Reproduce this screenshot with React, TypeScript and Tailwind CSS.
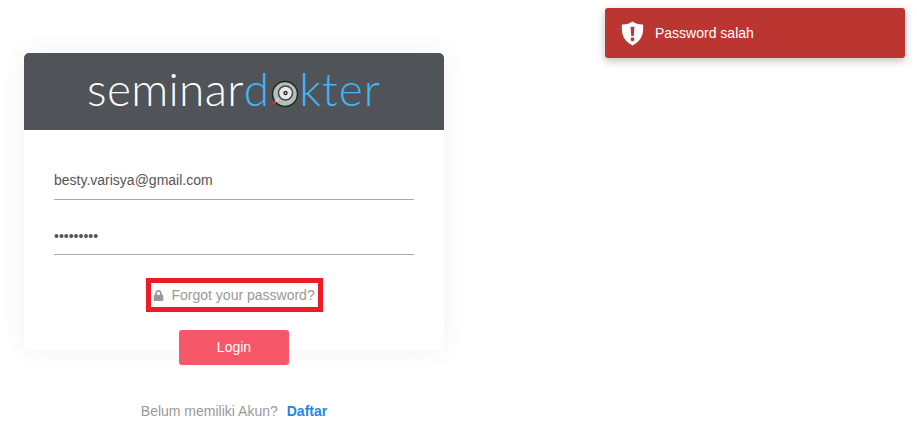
import React from "react";
import { FaLock } from "react-icons/fa";

const ShieldIcon = () => (
  <svg width="23" height="25" viewBox="0 0 24 25">
    <path
      fill="#fff"
      fillRule="evenodd"
      d="M12 0 C15 2.2 19 3.2 23 3 C23.6 11 23 19 12 25 C1 19 .4 11 1 3 C5 3.2 9 2.2 12 0 Z M10 5.5 L10.7 15 L13.3 15 L14 5.5 Z M12 16.5 A2 2 0 1 0 12 20.5 A2 2 0 1 0 12 16.5 Z"
    />
  </svg>
);

const Stethoscope = () => (
  <svg width="28" height="28" viewBox="0 0 28 28" className="ml-[2px] mr-0 mt-[10px] shrink-0">
    <circle cx="14" cy="14" r="12.5" fill="#b9bcbc" stroke="#12301a" strokeWidth="1.5" />
    <circle cx="14.5" cy="13" r="7" fill="#e8e8e8" stroke="#44484c" strokeWidth="1.5" />
    <circle cx="14.5" cy="13" r="2.2" fill="#2b2d30" />
    <circle cx="14.5" cy="13" r=".8" fill="#fff" />
    <path d="M8 18 L3 23" stroke="#d8d8d8" strokeWidth="1.5" />
    <path d="M4.5 21.5 L1 23.5" stroke="#d9262c" strokeWidth="2.5" />
  </svg>
);

const Field = ({ type, value, className }: { type: string; value: string; className: string }) => (
  <input
    type={type}
    value={value}
    readOnly
    className={`w-full border-b border-[#a9a9a9] text-[14px] text-[#555] outline-none ${className}`}
  />
);

export default function App() {
  return (
    <div className="relative h-[435px] w-[917px] overflow-hidden bg-white font-['Liberation_Sans',Arial,sans-serif]">
      <div className="absolute left-[605px] top-[8px] flex h-[50px] w-[300px] items-center rounded-[3px] bg-[#bb3631] pl-[15.5px] text-[14px] text-white shadow-[0_3px_8px_rgba(0,0,0,0.25)]">
        <ShieldIcon />
        <span className="ml-[11.5px]">Password salah</span>
      </div>

      <div className="flex w-[468px] flex-col items-center px-[24px] pt-[53px]">
        <div className="w-[420px] rounded-[5px] bg-white shadow-[0_0_30px_rgba(0,0,0,0.06)]">
          <div className="flex h-[77px] items-center justify-center rounded-t-[5px] bg-[#505358] pb-[6px] font-['Lato',sans-serif] text-[46px] font-light leading-none">
            <span className="tracking-[0.3px] text-white">seminar</span>
            <span className="text-[#45b5f5]">d</span>
            <Stethoscope />
            <span className="tracking-[1px] text-[#45b5f5]">kter</span>
          </div>

          <div className="flex flex-col items-center px-[30px] pt-[35px]">
            <Field type="text" value="besty.varisya@gmail.com" className="h-[35px] pb-[5px]" />
            <Field type="password" value="123456789" className="mt-[20px] h-[35px] pb-[3px]" />
            <a className="mt-[23px] inline-flex h-[34px] w-[177px] items-center border-[5px] border-[#ed1c24] pl-[2px] text-[14px] text-[#999]">
              <FaLock size={11} className="text-[#999]" />
              <span className="ml-[8px]">Forgot your password?</span>
            </a>
            <button className="mb-[-15px] mt-[18px] h-[35px] w-[110px] rounded-[3px] bg-[#f75869] text-[14px] text-white">
              Login
            </button>
          </div>
        </div>

        <p className="mt-[53px] text-[14px] leading-[16px] text-[#999]">
          Belum memiliki Akun?
          <a className="ml-[9px] font-bold text-[#1e88e5]">Daftar</a>
        </p>
      </div>
    </div>
  );
}
